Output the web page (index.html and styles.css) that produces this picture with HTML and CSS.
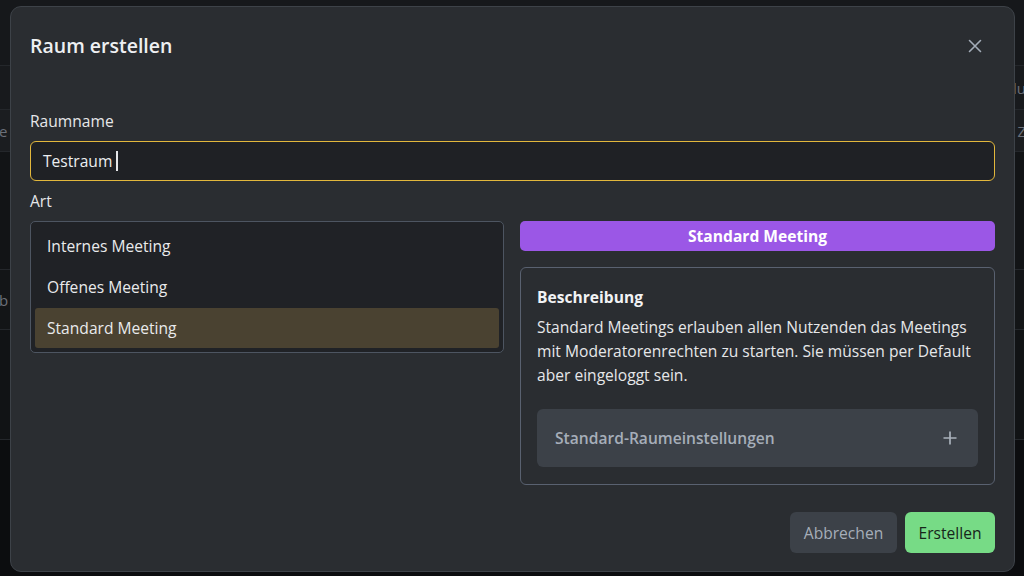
FILE: index.html
```html
<!DOCTYPE html>
<html lang="de">
<head>
<meta charset="utf-8">
<title>Raum erstellen</title>
<link rel="stylesheet" href="styles.css">
</head>
<body>
<div class="page">
  <div class="bg-row r1"></div>
  <div class="bg-row r2"><span class="bg-left"></span><span class="bg-right">lu</span></div>
  <div class="bg-row r3"><span class="bg-left">e</span><span class="bg-right">Z</span></div>
  <div class="bg-row r4"></div>
  <div class="bg-row r5"><span class="bg-left">b</span><span class="bg-right"></span></div>
  <div class="bg-row r6"></div>
  <div class="bg-row r7"></div>
</div>

<div class="modal">
  <div class="modal-header">
    <h1 class="modal-title">Raum erstellen</h1>
    <button class="close" aria-label="Schließen">
      <svg width="14" height="14" viewBox="0 0 14 14"><path d="M1.5 1.5 L12.5 12.5 M12.5 1.5 L1.5 12.5" stroke="#a3acb8" stroke-width="1.6" fill="none" stroke-linecap="round"/></svg>
    </button>
  </div>

  <label class="field-label">Raumname</label>
  <div class="input"><span>Testraum</span><span class="caret"></span></div>

  <label class="field-label art">Art</label>
  <div class="grid">
    <div class="listbox">
      <div class="item">Internes Meeting</div>
      <div class="item">Offenes Meeting</div>
      <div class="item selected">Standard Meeting</div>
    </div>
    <div class="right">
      <div class="badge">Standard Meeting</div>
      <div class="card">
        <div class="card-title">Beschreibung</div>
        <p class="card-text">Standard Meetings erlauben allen Nutzenden das Meetings mit Moderatorenrechten zu starten. Sie müssen per Default aber eingeloggt sein.</p>
        <div class="accordion">
          <span>Standard-Raumeinstellungen</span>
          <svg width="14" height="14" viewBox="0 0 14 14"><path d="M7 0.5 V13.5 M0.5 7 H13.5" stroke="#a9b1bb" stroke-width="1.7" fill="none"/></svg>
        </div>
      </div>
    </div>
  </div>

  <div class="footer">
    <button class="btn btn-secondary">Abbrechen</button>
    <button class="btn btn-primary">Erstellen</button>
  </div>
</div>
</body>
</html>
```
FILE: styles.css
```css
* { box-sizing: border-box; }
html, body {
  margin: 0;
  padding: 0;
  width: 1024px;
  height: 576px;
  overflow: hidden;
  background: #111315;
  font-family: "Open Sans", "Noto Sans", sans-serif;
}

.page {
  display: flex;
  flex-direction: column;
  height: 576px;
}
.bg-row {
  display: flex;
  justify-content: space-between;
  align-items: center;
  border-bottom: 1px solid #24272b;
  color: #6b7079;
  font-size: 15px;
}
.bg-left { margin-left: -1px; }
.bg-right { margin-right: -2px; }
.r1 { height: 66px; background: #16181b; }
.r2 { height: 44px; background: #181a1d; }
.r3 { height: 42px; background: #1b1d20; }
.r4 { height: 118px; background: #121416; }
.r5 { height: 60px; background: #131517; }
.r6 { height: 110px; background: #111315; }
.r7 { flex: 1; background: #0c0d0f; border-bottom: none; }

.modal {
  position: absolute;
  left: 10px;
  top: 6px;
  width: 1005px;
  height: 566px;
  background: #2a2d31;
  border: 1px solid #3d4248;
  border-radius: 11px;
  padding: 25px 19px 18px;
  display: flex;
  flex-direction: column;
  color: #e9eaec;
}

.modal-header {
  display: flex;
  justify-content: space-between;
  align-items: center;
  height: 28px;
}
.modal-title {
  margin: 0;
  font-size: 19.5px;
  font-weight: 600;
  line-height: 28px;
  color: #eef0f2;
}
.close {
  background: none;
  border: none;
  padding: 0;
  margin-right: 13px;
  width: 14px;
  height: 14px;
  display: flex;
}

.field-label {
  display: block;
  font-size: 15.6px;
  line-height: 20px;
  margin-top: 51px;
  color: #e6e7e9;
}
.field-label.art { margin-top: 10px; }

.input {
  margin-top: 10px;
  height: 40px;
  border: 1px solid #e2b73c;
  border-radius: 6px;
  background: #1f2125;
  display: flex;
  align-items: center;
  padding: 0 12px;
  font-size: 15.6px;
  color: #eceef0;
}
.caret {
  display: inline-block;
  width: 2px;
  height: 20px;
  background: #e6e7e9;
  margin-left: 4px;
}

.grid {
  margin-top: 10px;
  display: grid;
  grid-template-columns: 474px 1fr;
  gap: 16px;
  align-items: start;
}

.listbox {
  border: 1px solid #4d5561;
  border-radius: 5px;
  background: #202226;
  padding: 4px;
  display: flex;
  flex-direction: column;
  gap: 1px;
}
.item {
  height: 40px;
  line-height: 40px;
  padding: 0 12px;
  font-size: 15.6px;
  color: #e9eaec;
  border-radius: 3px;
}
.item.selected { background: #4a4231; }

.right {
  display: flex;
  flex-direction: column;
  gap: 16px;
}
.badge {
  height: 30px;
  line-height: 30px;
  text-align: center;
  background: #9b57e6;
  border-radius: 5px;
  font-size: 15.6px;
  font-weight: 700;
  color: #ffffff;
}
.card {
  border: 1px solid #596170;
  border-radius: 6px;
  padding: 18px 16px 17px;
}
.card-title {
  font-size: 15.6px;
  font-weight: 700;
  line-height: 22px;
  color: #f2f3f5;
}
.card-text {
  margin: 7px 0 0;
  font-size: 15.6px;
  line-height: 24px;
  color: #e6e7e9;
}
.accordion {
  margin-top: 22px;
  height: 58px;
  background: #3c4148;
  border-radius: 6px;
  display: flex;
  align-items: center;
  justify-content: space-between;
  padding: 0 21px 0 18px;
  font-size: 15.6px;
  font-weight: 600;
  color: #a6aeb9;
}

.footer {
  margin-top: 27px;
  display: flex;
  justify-content: flex-end;
  gap: 8px;
}
.btn {
  height: 41px;
  border: none;
  border-radius: 6px;
  font-family: "Open Sans", "Noto Sans", sans-serif;
  font-size: 15.6px;
  font-weight: 500;
  padding: 0 12px;
}
.btn-secondary {
  background: #3c4148;
  color: #a6aeb9;
  width: 107px;
}
.btn-primary {
  background: #77db86;
  color: #17261b;
  width: 90px;
}
```
